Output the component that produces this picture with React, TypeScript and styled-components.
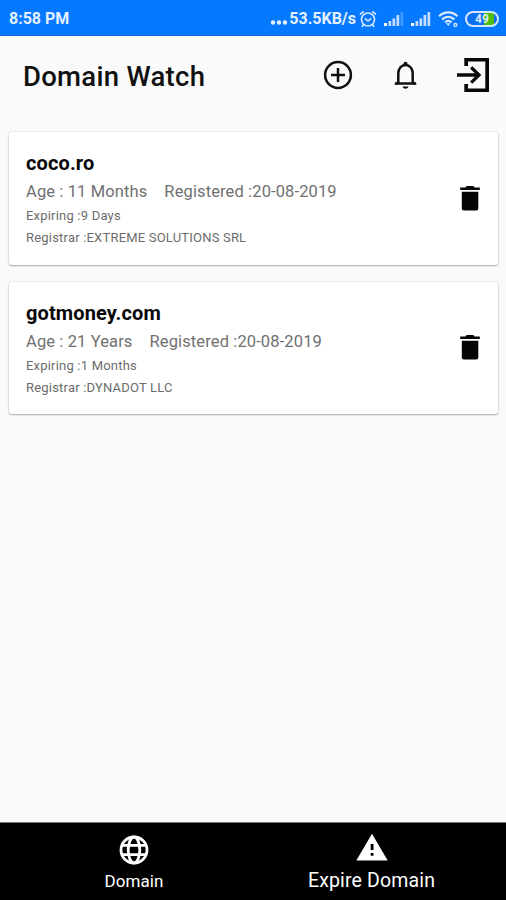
import React from "react";
import styled, { createGlobalStyle } from "styled-components";

const GlobalStyle = createGlobalStyle`
  * { box-sizing: border-box; }
  body { margin: 0; background: #fafafa; font-family: Roboto, sans-serif; }
  svg { display: block; flex: none; }
`;

const Screen = styled.div`
  width: 506px;
  height: 900px;
  display: flex;
  flex-direction: column;
  background: #fafafa;
  overflow: hidden;
`;

const StatusBar = styled.div`
  height: 36px;
  flex: none;
  padding: 2px 7px 0 9px;
  display: flex;
  align-items: center;
  justify-content: space-between;
  background: #0579ff;
  border-bottom: 1px solid #0a69dc;
  color: #e4f0ff;
`;

const StatusText = styled.span`
  font-size: 16px;
  font-weight: 700;
  line-height: 20px;
  white-space: pre;
`;

const StatusGroup = styled.div`
  display: flex;
  align-items: center;
`;

const StatusIcons = styled.div`
  display: grid;
  grid-template-columns: 25px 27px 27px 27px 34px;
  align-items: center;
  margin-left: 3px;
`;

const Header = styled.header`
  height: 79px;
  flex: none;
  padding: 0 16px 0 23px;
  display: flex;
  align-items: center;
  justify-content: space-between;
`;

const Title = styled.h1`
  margin: 3px 0 0;
  font-size: 27.5px;
  font-weight: 500;
  line-height: 36px;
  letter-spacing: 0.28px;
  color: #111;
  white-space: nowrap;
`;

const Actions = styled.div`
  display: flex;
  align-items: center;
  gap: 33.5px;
  margin-bottom: 1px;
`;

const IconButton = styled.button`
  border: 0;
  padding: 0;
  background: none;
  color: inherit;
`;

const CardList = styled.main`
  flex: 1;
  padding: 17px 8px 0 9px;
  display: flex;
  flex-direction: column;
  gap: 17px;
`;

const Card = styled.article`
  height: 132.5px;
  flex: none;
  padding: 17px 17px 0;
  display: flex;
  justify-content: space-between;
  background: #fff;
  border-radius: 3px;
  box-shadow: 0 1px 2px rgba(0, 0, 0, 0.3), 0 0 2px rgba(0, 0, 0, 0.14);
  color: #000;
`;

const CardBody = styled.div`
  display: flex;
  flex-direction: column;
  align-items: flex-start;
`;

const DomainName = styled.h2`
  margin: 0;
  font-size: 20px;
  font-weight: 700;
  line-height: 28px;
  letter-spacing: 0.12px;
  color: #080808;
`;

const Summary = styled.div`
  display: flex;
  gap: 17px;
  height: 28px;
  font-size: 16.5px;
  line-height: 30px;
  letter-spacing: 0.12px;
  color: #707070;
  white-space: nowrap;
`;

const Detail = styled.div`
  height: 22.3px;
  font-size: 13px;
  line-height: 22px;
  letter-spacing: 0.2px;
  color: #6c6c6c;
  white-space: nowrap;
`;

const DeleteButton = styled(IconButton)`
  height: 28px;
  margin-top: 35.5px;
`;

const Nav = styled.nav`
  height: 78.5px;
  flex: none;
  display: grid;
  grid-template-columns: 268px 207px;
  background: #000;
  border-top: 1px solid #777;
  color: #fff;
`;

const NavItem = styled.div<{ $active?: boolean }>`
  display: flex;
  flex-direction: column;
  align-items: center;
  padding-top: ${(p) => (p.$active ? 8 : 12)}px;
  gap: ${(p) => (p.$active ? 8 : 4)}px;
  font-size: ${(p) => (p.$active ? 19.5 : 17)}px;
  line-height: 24px;
  letter-spacing: ${(p) => (p.$active ? 0.15 : 0.1)}px;
  white-space: nowrap;
`;

const AlarmIcon = () => (
  <svg width="18" height="20" viewBox="0 0 18 20" fill="none" stroke="#d6e8ff" strokeWidth="1.6">
    <circle cx="9" cy="10.5" r="6.5" />
    <path d="M5.8 9.3 9 12l3.2-2.7M1 5.3l3.6-2.8M17 5.3l-3.6-2.8M4.4 15.5 3 17.8M13.6 15.5l1.4 2.3" />
  </svg>
);

const SignalIcon = ({ full }: { full?: boolean }) => (
  <svg width="20" height="16" viewBox="0 0 20 16" fill="#c5deff">
    <path fill="#fff" d="M0 12h3v3H0z" />
    <path d="M4.5 10h2.7v5H4.5zM8.5 7.5h2.7V15H8.5zM12.5 4h2.7v11h-2.7z" />
    <path fillOpacity={full ? 1 : 0.32} d="M16.5 1h2.7v14h-2.7z" />
  </svg>
);

const WifiIcon = () => (
  <svg width="21" height="18" viewBox="0 0 21 18" fill="none" stroke="#d9e9ff" strokeWidth="2.2">
    <path d="M1 6.2c5.5-5.2 13-5.2 18.5 0M4 9.4c3.8-3.5 8.6-3.5 12.4 0M7 12.4c2-1.8 4.5-1.8 6.5 0" />
    <path fill="#d9e9ff" stroke="none" d="M8 13.3h4.5l-2.2 2.6z" />
    <circle cx="17.3" cy="15" r="1.5" strokeWidth="1.3" />
  </svg>
);

const Battery = styled.div`
  width: 34px;
  height: 16px;
  display: flex;
  align-items: center;
  justify-content: center;
  border: 2px solid #d2e6ff;
  border-radius: 8px;
  background: linear-gradient(90deg, #0c6ff0 0 56%, #4dbd10 56% 91%, #0c6ff0 91%);
  color: #dcebff;
  font-size: 12px;
  font-weight: 700;
  line-height: 12px;
`;

const AddIcon = () => (
  <svg width="34" height="34" viewBox="0 0 34 34" fill="none" stroke="#101010" strokeWidth="2.5">
    <circle cx="17" cy="17" r="12.9" />
    <path d="M17 10v14M10 17h14" />
  </svg>
);

const BellIcon = () => (
  <svg width="34" height="34" viewBox="0 0 34 34" fill="none" stroke="#101010" strokeWidth="2.5">
    <path d="M9.3 25.5V15.2c0-4.5 2.8-8.1 7.2-8.1s7.2 3.6 7.2 8.1v10.3" />
    <path d="M5.9 25.5h21.2" />
    <path fill="#101010" stroke="none" d="M14.5 7V5.8a2 2 0 0 1 4 0V7zM5.2 26.5l4-4v4zM27.8 26.5l-4-4v4zM13.7 28.5h5.6c0 1.3-1.1 2.2-2.8 2.2s-2.8-.9-2.8-2.2z" />
  </svg>
);

const ExitIcon = () => (
  <svg width="34" height="34" viewBox="0 0 34 34" fill="none" stroke="#080808">
    <path fill="#080808" stroke="none" d="M8.3 0H33v34H8.3v-8H12v4.5h17.3V3.5H12V8H8.3z" />
    <path strokeWidth="3.3" d="M1 17h22M15.2 9.4 23 17l-7.8 7.6" />
  </svg>
);

const TrashIcon = () => (
  <svg width="22" height="28" viewBox="0 0 22 28" fill="#050505">
    <path d="M1.2 2.6h5.2L7.7 1h6.6l1.3 1.6h5.2v2.5H1.2zM2.8 6.8h16.5v16.8q0 2-2 2H4.8q-2 0-2-2z" />
  </svg>
);

const GlobeIcon = () => (
  <svg width="30" height="30" viewBox="0 0 30 30" fill="none" stroke="#fff" strokeWidth="2.8">
    <circle cx="15" cy="15" r="13" />
    <ellipse cx="15" cy="15" rx="5.8" ry="13" />
    <path d="M3 10.4h24M3 19.6h24" />
  </svg>
);

const WarningIcon = () => (
  <svg width="32" height="30" viewBox="0 0 32 30">
    <path fill="#fff" d="M16 2.8 31.7 29.5H.3z" />
    <path fill="#000" d="M14.7 13h2.8v6h-2.8zM14.7 22h2.8v2.7h-2.8z" />
  </svg>
);

const domains = [
  { name: "coco.ro", age: "11 Months", registered: "20-08-2019", expiring: "9 Days", registrar: "EXTREME SOLUTIONS SRL" },
  { name: "gotmoney.com", age: "21 Years", registered: "20-08-2019", expiring: "1 Months", registrar: "DYNADOT LLC" },
];

export default function App() {
  return (
    <Screen>
      <GlobalStyle />
      <StatusBar>
        <StatusText>8:58 PM</StatusText>
        <StatusGroup>
          <svg width="19" height="16" viewBox="0 0 19 16" fill="#e4f0ff">
            <circle cx="3" cy="11.5" r="2.2" /><circle cx="9" cy="11.5" r="2.2" /><circle cx="15" cy="11.5" r="2.2" />
          </svg>
          <StatusText>53.5KB/s</StatusText>
          <StatusIcons>
            <AlarmIcon /><SignalIcon /><SignalIcon full /><WifiIcon />
            <Battery>49</Battery>
          </StatusIcons>
        </StatusGroup>
      </StatusBar>
      <Header>
        <Title>Domain Watch</Title>
        <Actions>
          <IconButton aria-label="Add domain"><AddIcon /></IconButton>
          <IconButton aria-label="Notifications"><BellIcon /></IconButton>
          <IconButton aria-label="Sign out"><ExitIcon /></IconButton>
        </Actions>
      </Header>
      <CardList>
        {domains.map((d) => (
          <Card key={d.name}>
            <CardBody>
              <DomainName>{d.name}</DomainName>
              <Summary>
                <span>Age : {d.age}</span>
                <span>Registered :{d.registered}</span>
              </Summary>
              <Detail>Expiring :{d.expiring}</Detail>
              <Detail>Registrar :{d.registrar}</Detail>
            </CardBody>
            <DeleteButton aria-label="Delete"><TrashIcon /></DeleteButton>
          </Card>
        ))}
      </CardList>
      <Nav>
        <NavItem><GlobeIcon />Domain</NavItem>
        <NavItem $active><WarningIcon />Expire Domain</NavItem>
      </Nav>
    </Screen>
  );
}
